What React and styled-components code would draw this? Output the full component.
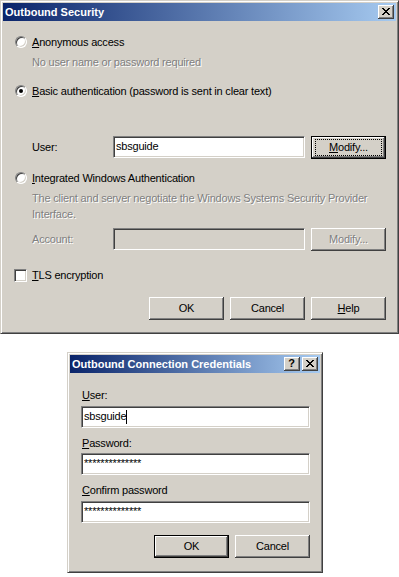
import React from 'react';
import styled, { createGlobalStyle, css } from 'styled-components';

const Global = createGlobalStyle`
  html, body { margin: 0; padding: 0; background: #fff; }
  body { font-family: "Liberation Sans", Arial, sans-serif; font-size: 11px; }
`;

const Page = styled.div`
  display: flex;
  flex-direction: column;
  align-items: flex-start;
  width: 399px;
`;

const Window = styled.div`
  box-sizing: border-box;
  width: ${p => p.$w}px;
  height: ${p => p.$h}px;
  margin-left: ${p => p.$x || 0}px;
  margin-top: ${p => p.$y || 0}px;
  background: #d4d0c8;
  border: 1px solid;
  border-color: #d4d0c8 #404040 #404040 #d4d0c8;
  box-shadow: inset 1px 1px #fff, inset -1px -1px #808080;
  padding: 2px;
  display: flex;
  flex-direction: column;
  color: #000;
  font-family: "Liberation Sans", Arial, sans-serif;
  font-size: 11px;
`;

const TitleBar = styled.div`
  flex: none;
  height: 18px;
  background: linear-gradient(to right, #0a246a, #a6caf0);
  display: flex;
  align-items: center;
  justify-content: space-between;
  padding: 0 2px;
`;

const Title = styled.span`
  color: #fff;
  font-weight: bold;
  font-size: 11px;
  white-space: nowrap;
`;

const CaptionButtons = styled.div`
  display: flex;
  gap: 2px;
`;

const CaptionButton = styled.div`
  box-sizing: border-box;
  width: 16px;
  height: 14px;
  background: #d4d0c8;
  box-shadow: inset -1px -1px #404040, inset 1px 1px #fff, inset -2px -2px #808080;
  display: flex;
  align-items: center;
  justify-content: center;
  padding: 0 1px 1px 0;
  color: #000;
  font-weight: bold;
  font-size: 11px;
  line-height: 1;
`;

const Body = styled.div`
  display: flex;
  flex-direction: column;
  padding: 0 ${p => p.$pr || 10}px 0 ${p => p.$pl || 12}px;
  letter-spacing: -0.2px;
`;

const OptionRow = styled.div`
  display: flex;
  align-items: center;
  gap: 5px;
  height: 16px;
  margin-top: ${p => p.$mt}px;
  white-space: nowrap;
`;

const RadioCircle = styled.span`
  flex: none;
  box-sizing: border-box;
  width: 12px;
  height: 12px;
  border-radius: 50%;
  background: #fff;
  border: 1px solid;
  border-color: #808080 #fff #fff #808080;
  box-shadow: inset 1px 1px #404040, inset -1px -1px #d4d0c8;
  display: flex;
  align-items: center;
  justify-content: center;
  &::after {
    content: '';
    width: 4px;
    height: 4px;
    border-radius: 50%;
    background: #000;
    display: ${p => (p.$checked ? 'block' : 'none')};
  }
`;

const CheckBox = styled.span`
  flex: none;
  box-sizing: border-box;
  width: 13px;
  height: 13px;
  margin-left: -1px;
  background: #fff;
  border: 1px solid;
  border-color: #808080 #fff #fff #808080;
  box-shadow: inset 1px 1px #404040, inset -1px -1px #d4d0c8;
`;

const Key = styled.span`
  text-decoration: underline;
`;

const Indented = styled.div`
  margin-top: ${p => p.$mt}px;
  padding-left: 17px;
  line-height: 16px;
  ${p => p.$disabled && css`
    color: #808080;
    text-shadow: 1px 1px 0 #fff;
  `}
`;

const FieldRow = styled.div`
  display: flex;
  align-items: flex-start;
  margin-top: ${p => p.$mt}px;
  padding-left: 17px;
  gap: 6px;
`;

const FieldLabel = styled.span`
  width: 75px;
  line-height: 22px;
  ${p => p.$disabled && css`
    color: #808080;
    text-shadow: 1px 1px 0 #fff;
  `}
`;

const Field = styled.div`
  box-sizing: border-box;
  flex: none;
  width: ${p => p.$w}px;
  height: 22px;
  margin-top: ${p => p.$mt || 0}px;
  background: ${p => (p.$disabled ? '#d4d0c8' : '#fff')};
  border: 1px solid;
  border-color: #808080 #fff #fff #808080;
  box-shadow: inset 1px 1px #404040, inset -1px -1px #d4d0c8;
  padding: 2px 2px 0 2px;
  line-height: 15px;
  white-space: nowrap;
  overflow: hidden;
  display: flex;
  align-items: flex-start;
`;

const Caret = styled.span`
  display: inline-block;
  width: 1px;
  height: 14px;
  margin-top: 1px;
  background: #000;
`;

const Button = styled.div`
  position: relative;
  box-sizing: border-box;
  flex: none;
  width: 75px;
  height: 23px;
  background: #d4d0c8;
  box-shadow: inset -1px -1px #404040, inset 1px 1px #fff, inset -2px -2px #808080, inset 2px 2px #d4d0c8;
  display: flex;
  align-items: center;
  justify-content: center;
  padding-bottom: 1px;
  white-space: nowrap;
  ${p => p.$default && css`
    border: 1px solid #000;
    box-shadow: inset -1px -1px #404040, inset 1px 1px #fff, inset -2px -2px #808080;
  `}
  ${p => p.$disabled && css`
    color: #808080;
    text-shadow: 1px 1px 0 #fff;
  `}
  ${p => p.$focused && css`
    &::after {
      content: '';
      position: absolute;
      left: 3px;
      right: 3px;
      top: 2px;
      bottom: 2px;
      border: 1px dotted #000;
    }
  `}
`;

const ButtonRow = styled.div`
  display: flex;
  justify-content: flex-end;
  gap: 6px;
  margin-top: ${p => p.$mt}px;
`;

const Label = styled.div`
  height: 16px;
  line-height: 16px;
  margin-top: ${p => p.$mt}px;
  padding-left: 1px;
`;

const CloseGlyph = () => (
  <svg width="8" height="7" viewBox="0 0 8 7" shapeRendering="crispEdges">
    <path
      fill="#000"
      d="M0 0h2v1H0zM6 0h2v1H6zM1 1h2v1H1zM5 1h2v1H5zM2 2h4v1H2zM3 3h2v1H3zM2 4h4v1H2zM1 5h2v1H1zM5 5h2v1H5zM0 6h2v1H0zM6 6h2v1H6z"
    />
  </svg>
);

export default function App() {
  return (
    <Page>
      <Global />
      <Window $w={399} $h={334}>
        <TitleBar>
          <Title>Outbound Security</Title>
          <CaptionButtons>
            <CaptionButton><CloseGlyph /></CaptionButton>
          </CaptionButtons>
        </TitleBar>
        <Body $pl={12} $pr={10}>
          <OptionRow $mt={13}>
            <RadioCircle />
            <span><Key>A</Key>nonymous access</span>
          </OptionRow>
          <Indented $mt={4} $disabled>No user name or password required</Indented>
          <OptionRow $mt={13}>
            <RadioCircle $checked />
            <span><Key>B</Key>asic authentication (password is sent in clear text)</span>
          </OptionRow>
          <FieldRow $mt={37}>
            <FieldLabel>User:</FieldLabel>
            <Field $w={192}>sbsguide</Field>
            <Button $default $focused><span><Key>M</Key>odify...</span></Button>
          </FieldRow>
          <OptionRow $mt={11}>
            <RadioCircle />
            <span><Key>I</Key>ntegrated Windows Authentication</span>
          </OptionRow>
          <Indented $mt={4} $disabled>
            The client and server negotiate the Windows Systems Security Provider<br />Interface.
          </Indented>
          <FieldRow $mt={6}>
            <FieldLabel $disabled>Account:</FieldLabel>
            <Field $w={192} $disabled />
            <Button $disabled>Modify...</Button>
          </FieldRow>
          <OptionRow $mt={16}>
            <CheckBox />
            <span><Key>T</Key>LS encryption</span>
          </OptionRow>
          <ButtonRow $mt={14}>
            <Button>OK</Button>
            <Button>Cancel</Button>
            <Button><span><Key>H</Key>elp</span></Button>
          </ButtonRow>
        </Body>
      </Window>

      <Window $w={256} $h={221} $x={67} $y={18}>
        <TitleBar>
          <Title>Outbound Connection Credentials</Title>
          <CaptionButtons>
            <CaptionButton>?</CaptionButton>
            <CaptionButton><CloseGlyph /></CaptionButton>
          </CaptionButtons>
        </TitleBar>
        <Body $pl={11} $pr={10}>
          <Label $mt={14}><Key>U</Key>ser:</Label>
          <Field $w={229} $mt={3}>sbsguide<Caret /></Field>
          <Label $mt={7}><Key>P</Key>assword:</Label>
          <Field $w={229} $mt={2}>**************</Field>
          <Label $mt={7}><Key>C</Key>onfirm password</Label>
          <Field $w={229} $mt={3}>**************</Field>
          <ButtonRow $mt={12}>
            <Button $default>OK</Button>
            <Button>Cancel</Button>
          </ButtonRow>
        </Body>
      </Window>
    </Page>
  );
}
